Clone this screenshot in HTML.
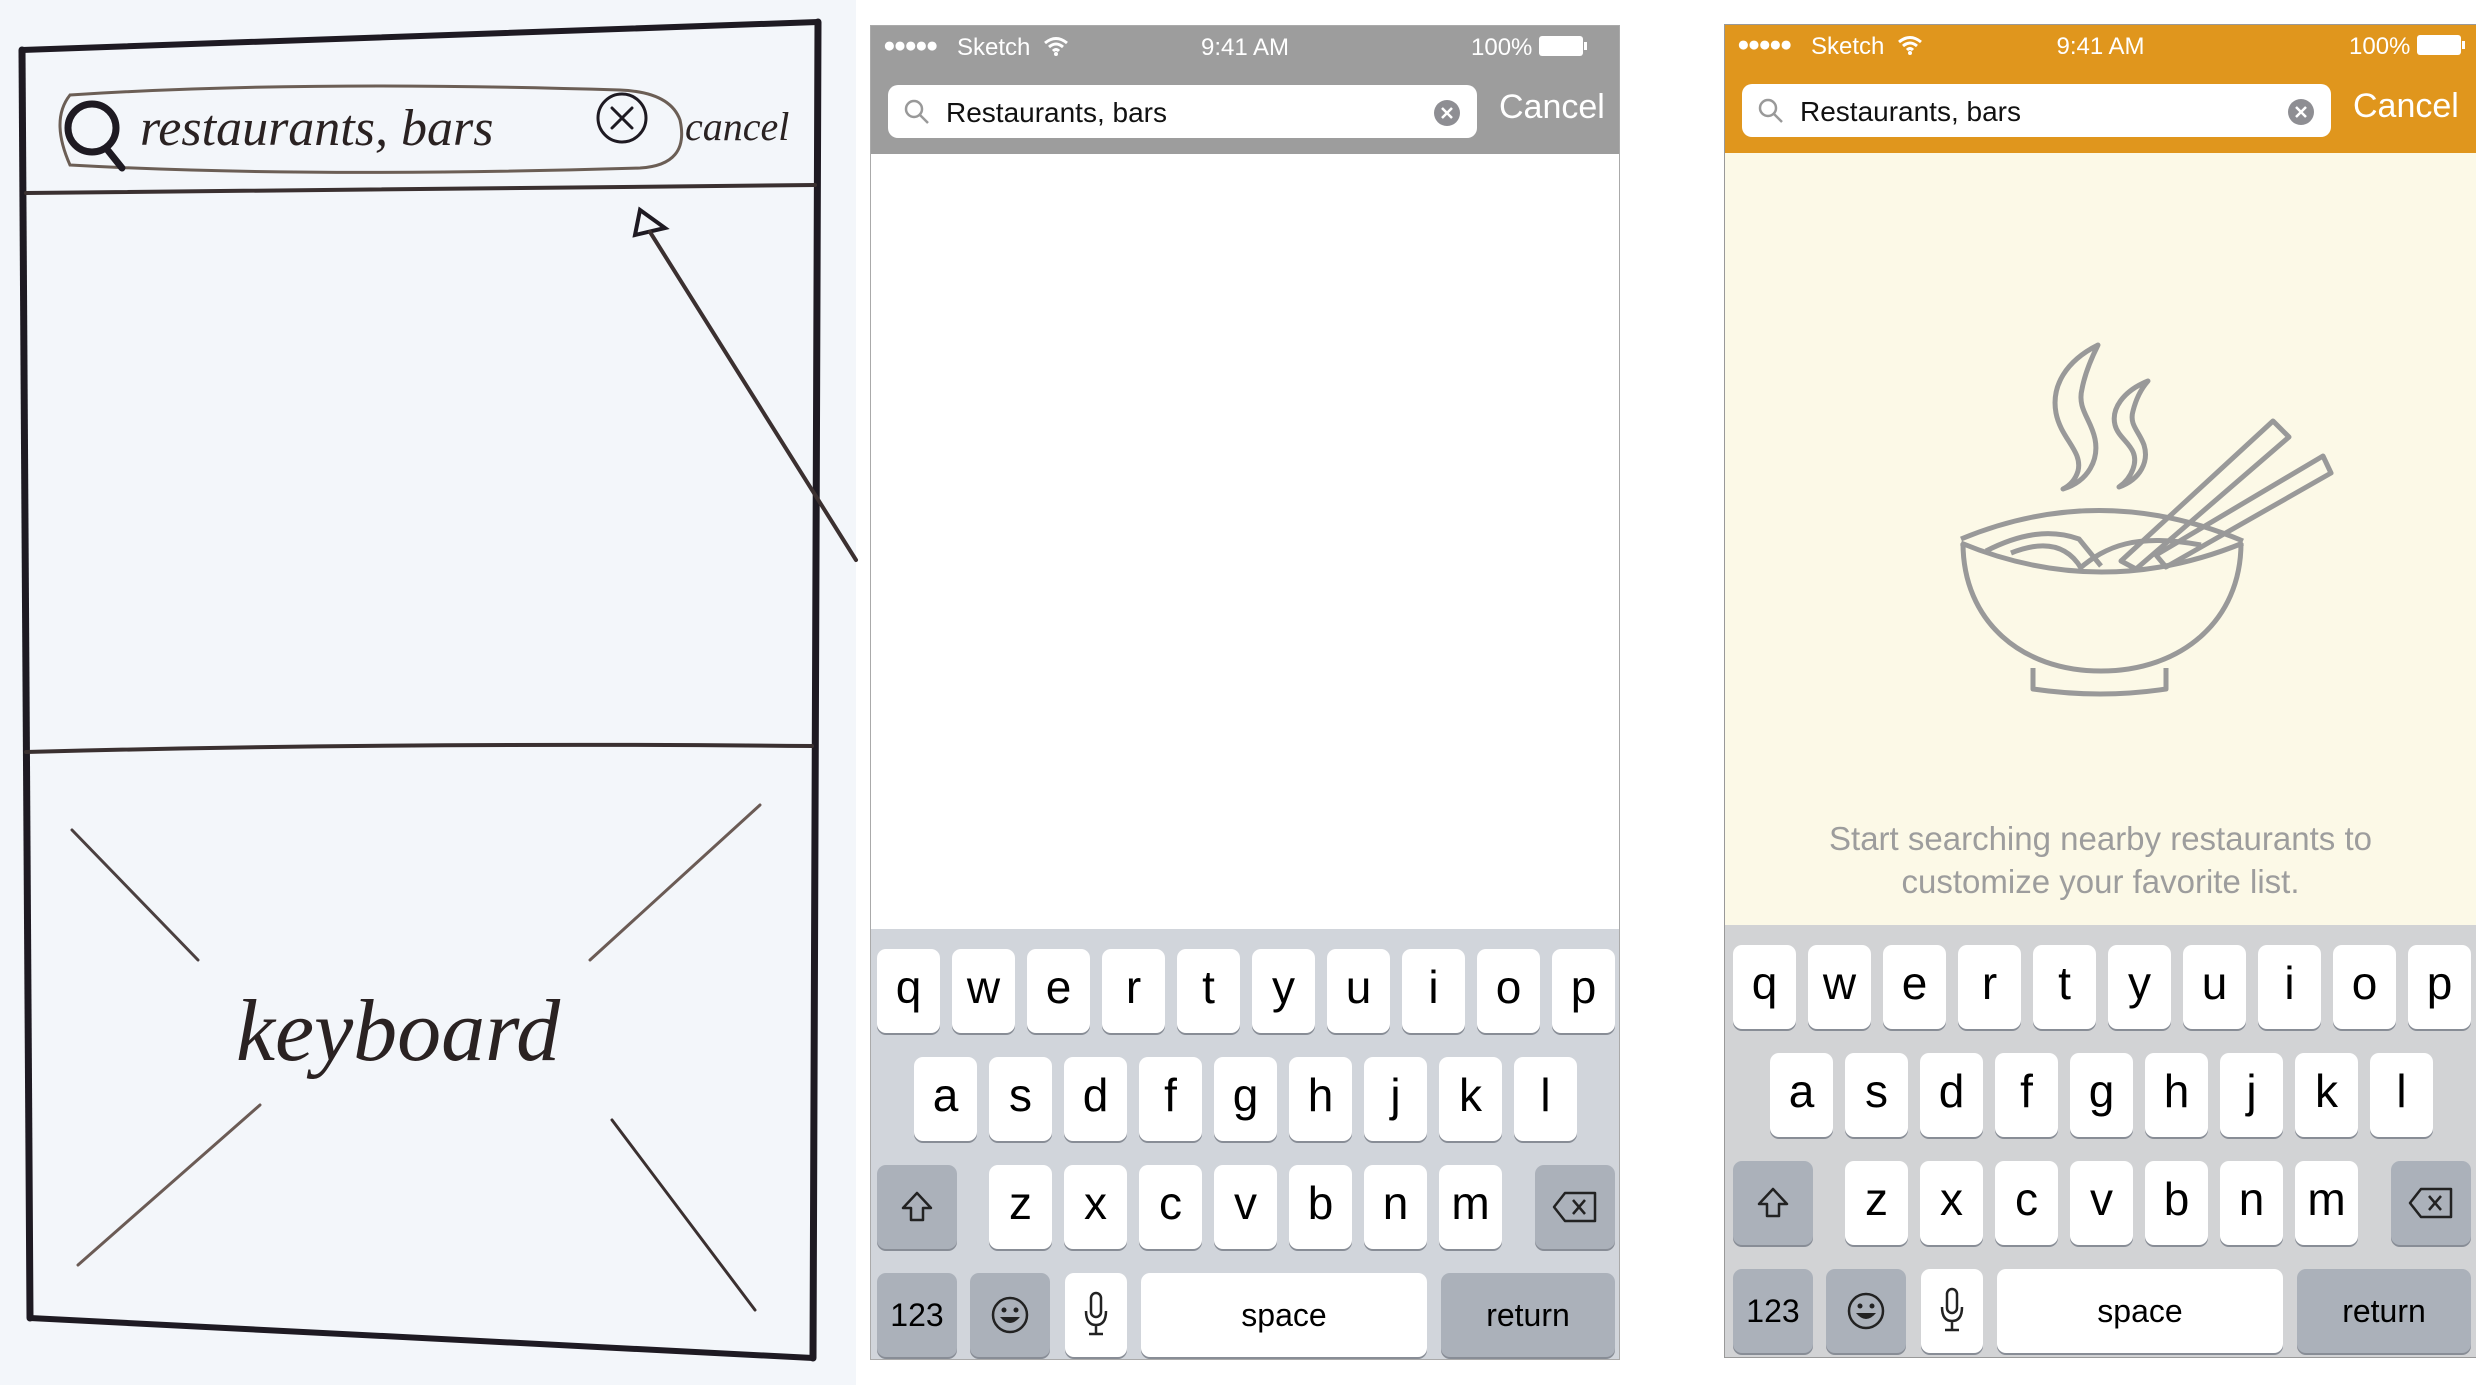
<!DOCTYPE html>
<html><head><meta charset="utf-8"><style>
*{margin:0;padding:0;box-sizing:border-box}
body{width:2476px;height:1385px;background:#fff;position:relative;overflow:hidden;font-family:"Liberation Sans",sans-serif}
.abs{position:absolute}
.phone{position:absolute;overflow:hidden}
.sb{position:absolute;top:0;left:0;right:0;height:44px;color:#fff;font-size:24px}
.field{position:absolute;left:17px;top:59px;width:589px;height:53px;background:#fff;border-radius:10px}
.field .t{position:absolute;left:58px;top:12px;font-size:28px;color:#111}
.cancel{position:absolute;left:628px;top:62px;font-size:34px;color:#fff}
.kb{position:absolute;left:0;top:0;width:100%;height:431px}
.k{position:absolute;width:63px;height:84px;background:#fff;border-radius:9px;box-shadow:0 2px 0 #888d96;text-align:center;font-size:46px;line-height:76px;color:#000}
.g{background:#abb1ba}
.s{font-size:32px;line-height:84px}
.dots{position:absolute;left:12px;top:8px;font-size:21px;letter-spacing:-2px}
</style></head><body>

<!-- sketch -->
<div class="abs" style="left:0;top:0;width:856px;height:1385px;background:#f3f6fa"></div>
<svg class="abs" style="left:0;top:0" width="860" height="1385" viewBox="0 0 860 1385">
<g fill="none" stroke="#1e1a22" stroke-linecap="round">
<path d="M22 50 L818 22" stroke-width="6"/>
<path d="M22 50 L30 1318" stroke-width="7"/>
<path d="M818 22 L813 1358" stroke-width="7"/>
<path d="M30 1318 L813 1358" stroke-width="6"/>
<path d="M26 193 Q400 188 815 185" stroke-width="4" stroke="#3a3030"/>
<path d="M26 752 Q400 742 812 746" stroke-width="4" stroke="#3a3030"/>
<path d="M70 95 Q50 120 70 165 Q300 178 640 168 Q690 165 680 120 Q670 92 620 90 Q300 80 70 95Z" stroke-width="3" stroke="#6b5e55"/>
<circle cx="92" cy="128" r="24" stroke-width="7"/>
<path d="M106 148 L122 168" stroke-width="7"/>
<circle cx="622" cy="118" r="24" stroke-width="3"/>
<path d="M612 108 L632 128 M632 108 L612 128" stroke-width="3"/>
<path d="M640 210 L635 235 L665 228 Z" stroke-width="4"/>
<path d="M650 232 L856 560" stroke-width="4" stroke="#3b3030"/>
<path d="M72 830 L198 960" stroke-width="3" stroke="#4b4040"/>
<path d="M760 805 L590 960" stroke-width="3" stroke="#6b5b55"/>
<path d="M260 1105 L78 1265" stroke-width="3" stroke="#6b5b55"/>
<path d="M612 1120 L755 1310" stroke-width="3" stroke="#3b3030"/>
</g>
<text x="236" y="1060" font-family="Liberation Serif,serif" font-style="italic" font-size="88" fill="#2a2222">keyboard</text>
<text x="140" y="145" font-family="Liberation Serif,serif" font-style="italic" font-size="52" fill="#2a2222">restaurants, bars</text>
<text x="685" y="140" font-family="Liberation Serif,serif" font-style="italic" font-size="40" fill="#2a2222">cancel</text>
</svg>

<!-- gray phone -->
<div class="phone" style="left:870px;top:25px;width:750px;height:1335px;background:#fff;border:1px solid #aaa">
 <div class="abs" style="left:0;top:0;width:100%;height:128px;background:#9d9d9d"></div>
 <div class="sb">
  <span class="dots">●●●●●</span>
  <span class="abs" style="left:86px;top:8px">Sketch</span>
  <svg class="abs" style="left:172px;top:10px" width="26" height="20" viewBox="0 0 26 20"><path d="M2 7 Q13 -2 24 7 M6 11 Q13 5 20 11 M10 15 Q13 12 16 15" stroke="#fff" stroke-width="3" fill="none"/><circle cx="13" cy="18" r="2" fill="#fff"/></svg>
  <span class="abs" style="left:0;width:100%;text-align:center;top:8px">9:41 AM</span>
  <span class="abs" style="left:600px;top:8px">100%</span>
  <div class="abs" style="left:668px;top:10px;width:44px;height:20px;background:#fff;border-radius:3px"></div>
  <div class="abs" style="left:713px;top:16px;width:3px;height:8px;background:#fff"></div>
 </div>
 <div class="field">
  <svg class="abs" style="left:16px;top:14px" width="26" height="26" viewBox="0 0 26 26"><circle cx="10" cy="10" r="8" stroke="#999" stroke-width="2.5" fill="none"/><path d="M16 16 L24 24" stroke="#999" stroke-width="2.5"/></svg>
  <span class="t">Restaurants, bars</span>
  <svg class="abs" style="left:545px;top:14px" width="28" height="28" viewBox="0 0 28 28"><circle cx="14" cy="14" r="13" fill="#8e8e93"/><path d="M9 9 L19 19 M19 9 L9 19" stroke="#fff" stroke-width="2.5"/></svg>
 </div>
 <span class="cancel">Cancel</span>
 <div class="kb" style="top:903px;background:#d1d5db;height:432px">
  <div class="k" style="left:6px;top:20px">q</div><div class="k" style="left:81px;top:20px">w</div><div class="k" style="left:156px;top:20px">e</div><div class="k" style="left:231px;top:20px">r</div><div class="k" style="left:306px;top:20px">t</div><div class="k" style="left:381px;top:20px">y</div><div class="k" style="left:456px;top:20px">u</div><div class="k" style="left:531px;top:20px">i</div><div class="k" style="left:606px;top:20px">o</div><div class="k" style="left:681px;top:20px">p</div>
  <div class="k" style="left:43px;top:128px">a</div><div class="k" style="left:118px;top:128px">s</div><div class="k" style="left:193px;top:128px">d</div><div class="k" style="left:268px;top:128px">f</div><div class="k" style="left:343px;top:128px">g</div><div class="k" style="left:418px;top:128px">h</div><div class="k" style="left:493px;top:128px">j</div><div class="k" style="left:568px;top:128px">k</div><div class="k" style="left:643px;top:128px">l</div>
  <div class="k g" style="left:6px;top:236px;width:80px"><svg width="40" height="40" viewBox="0 0 40 40" style="margin-top:22px"><path d="M20 6 L34 21 L26 21 L26 33 L14 33 L14 21 L6 21Z" fill="none" stroke="#222" stroke-width="2.5" stroke-linejoin="round"/></svg></div>
  <div class="k" style="left:118px;top:236px">z</div><div class="k" style="left:193px;top:236px">x</div><div class="k" style="left:268px;top:236px">c</div><div class="k" style="left:343px;top:236px">v</div><div class="k" style="left:418px;top:236px">b</div><div class="k" style="left:493px;top:236px">n</div><div class="k" style="left:568px;top:236px">m</div>
  <div class="k g" style="left:664px;top:236px;width:80px"><svg width="48" height="34" viewBox="0 0 48 34" style="margin-top:25px"><path d="M14 3 L44 3 L44 31 L14 31 L3 17Z" fill="none" stroke="#222" stroke-width="2.5" stroke-linejoin="round"/><path d="M22 10 L34 24 M34 10 L22 24" stroke="#222" stroke-width="2.5"/></svg></div>
  <div class="k g s" style="left:6px;top:344px;width:80px">123</div>
  <div class="k g" style="left:99px;top:344px;width:80px"><svg width="40" height="40" viewBox="0 0 40 40" style="margin-top:22px"><circle cx="20" cy="20" r="17" fill="none" stroke="#222" stroke-width="2.5"/><circle cx="14" cy="15" r="2.5" fill="#222"/><circle cx="26" cy="15" r="2.5" fill="#222"/><path d="M10 22 Q20 34 30 22Z" fill="#222"/></svg></div>
  <div class="k" style="left:194px;top:344px;width:62px"><svg width="24" height="46" viewBox="0 0 24 46" style="margin-top:18px"><rect x="7" y="2" width="10" height="24" rx="5" fill="none" stroke="#222" stroke-width="2.5"/><path d="M2 20 Q2 34 12 34 Q22 34 22 20 M12 34 L12 42 M5 43 L19 43" fill="none" stroke="#222" stroke-width="2.5"/></svg></div>
  <div class="k s" style="left:270px;top:344px;width:286px">space</div>
  <div class="k g s" style="left:570px;top:344px;width:174px">return</div>
 </div>
</div>

<!-- orange phone -->
<div class="phone" style="left:1724px;top:24px;width:752px;height:1334px;background:#fcf9e7;border:1px solid #999;border-right:none">
 <div class="abs" style="left:0;top:0;width:100%;height:128px;background:#e0961d"></div>
 <div class="sb">
  <span class="dots">●●●●●</span>
  <span class="abs" style="left:86px;top:8px">Sketch</span>
  <svg class="abs" style="left:172px;top:10px" width="26" height="20" viewBox="0 0 26 20"><path d="M2 7 Q13 -2 24 7 M6 11 Q13 5 20 11 M10 15 Q13 12 16 15" stroke="#fff" stroke-width="3" fill="none"/><circle cx="13" cy="18" r="2" fill="#fff"/></svg>
  <span class="abs" style="left:0;width:100%;text-align:center;top:8px">9:41 AM</span>
  <span class="abs" style="left:624px;top:8px">100%</span>
  <div class="abs" style="left:692px;top:10px;width:44px;height:20px;background:#fff;border-radius:3px"></div>
  <div class="abs" style="left:737px;top:16px;width:3px;height:8px;background:#fff"></div>
 </div>
 <div class="field">
  <svg class="abs" style="left:16px;top:14px" width="26" height="26" viewBox="0 0 26 26"><circle cx="10" cy="10" r="8" stroke="#999" stroke-width="2.5" fill="none"/><path d="M16 16 L24 24" stroke="#999" stroke-width="2.5"/></svg>
  <span class="t">Restaurants, bars</span>
  <svg class="abs" style="left:545px;top:14px" width="28" height="28" viewBox="0 0 28 28"><circle cx="14" cy="14" r="13" fill="#8e8e93"/><path d="M9 9 L19 19 M19 9 L9 19" stroke="#fff" stroke-width="2.5"/></svg>
 </div>
 <span class="cancel">Cancel</span>
 <svg class="abs" style="left:176px;top:296px" width="460" height="400" viewBox="0 0 460 400">
  <g fill="none" stroke="#999" stroke-width="5" stroke-linejoin="round">
   <path d="M197 24 C165 40 150 65 155 92 C160 118 182 130 177 150 C174 160 168 165 162 168 C188 160 198 138 194 118 C190 98 176 88 181 68 C184 52 190 38 197 24Z"/>
   <path d="M247 60 C222 70 210 88 214 104 C218 120 240 126 232 148 C229 156 224 162 218 166 C240 158 248 140 243 124 C238 110 228 104 232 90 C235 78 240 68 247 60Z"/>
   <path d="M60 218 Q200 160 342 220"/>
   <path d="M60 222 Q200 280 342 222"/>
   <path d="M62 222 C62 300 120 350 200 350 C280 350 340 300 340 222"/>
   <path d="M132 347 L132 368 Q200 378 265 368 L265 347"/>
   <path d="M85 230 C120 212 150 208 178 218 L200 245"/>
   <path d="M110 232 C140 220 165 222 180 247"/>
   <path d="M178 248 C205 225 235 212 300 224"/>
   <path d="M372 100 L388 116 L235 248 L220 240 Z"/>
   <path d="M422 135 L430 152 L265 246 L255 234 Z"/>
  </g>
 </svg>
 <div class="abs" style="left:0;width:100%;top:792px;text-align:center;font-size:33px;line-height:43px;color:#9d9d9d">Start searching nearby restaurants to<br>customize your favorite list.</div>
 <div class="kb" style="top:900px;background:#d2d3d5;height:434px">
  <div class="k" style="left:8px;top:20px">q</div><div class="k" style="left:83px;top:20px">w</div><div class="k" style="left:158px;top:20px">e</div><div class="k" style="left:233px;top:20px">r</div><div class="k" style="left:308px;top:20px">t</div><div class="k" style="left:383px;top:20px">y</div><div class="k" style="left:458px;top:20px">u</div><div class="k" style="left:533px;top:20px">i</div><div class="k" style="left:608px;top:20px">o</div><div class="k" style="left:683px;top:20px">p</div>
  <div class="k" style="left:45px;top:128px">a</div><div class="k" style="left:120px;top:128px">s</div><div class="k" style="left:195px;top:128px">d</div><div class="k" style="left:270px;top:128px">f</div><div class="k" style="left:345px;top:128px">g</div><div class="k" style="left:420px;top:128px">h</div><div class="k" style="left:495px;top:128px">j</div><div class="k" style="left:570px;top:128px">k</div><div class="k" style="left:645px;top:128px">l</div>
  <div class="k g" style="left:8px;top:236px;width:80px"><svg width="40" height="40" viewBox="0 0 40 40" style="margin-top:22px"><path d="M20 6 L34 21 L26 21 L26 33 L14 33 L14 21 L6 21Z" fill="none" stroke="#222" stroke-width="2.5" stroke-linejoin="round"/></svg></div>
  <div class="k" style="left:120px;top:236px">z</div><div class="k" style="left:195px;top:236px">x</div><div class="k" style="left:270px;top:236px">c</div><div class="k" style="left:345px;top:236px">v</div><div class="k" style="left:420px;top:236px">b</div><div class="k" style="left:495px;top:236px">n</div><div class="k" style="left:570px;top:236px">m</div>
  <div class="k g" style="left:666px;top:236px;width:80px"><svg width="48" height="34" viewBox="0 0 48 34" style="margin-top:25px"><path d="M14 3 L44 3 L44 31 L14 31 L3 17Z" fill="none" stroke="#222" stroke-width="2.5" stroke-linejoin="round"/><path d="M22 10 L34 24 M34 10 L22 24" stroke="#222" stroke-width="2.5"/></svg></div>
  <div class="k g s" style="left:8px;top:344px;width:80px">123</div>
  <div class="k g" style="left:101px;top:344px;width:80px"><svg width="40" height="40" viewBox="0 0 40 40" style="margin-top:22px"><circle cx="20" cy="20" r="17" fill="none" stroke="#222" stroke-width="2.5"/><circle cx="14" cy="15" r="2.5" fill="#222"/><circle cx="26" cy="15" r="2.5" fill="#222"/><path d="M10 22 Q20 34 30 22Z" fill="#222"/></svg></div>
  <div class="k" style="left:196px;top:344px;width:62px"><svg width="24" height="46" viewBox="0 0 24 46" style="margin-top:18px"><rect x="7" y="2" width="10" height="24" rx="5" fill="none" stroke="#222" stroke-width="2.5"/><path d="M2 20 Q2 34 12 34 Q22 34 22 20 M12 34 L12 42 M5 43 L19 43" fill="none" stroke="#222" stroke-width="2.5"/></svg></div>
  <div class="k s" style="left:272px;top:344px;width:286px">space</div>
  <div class="k g s" style="left:572px;top:344px;width:174px">return</div>
 </div>
</div>
</body></html>
